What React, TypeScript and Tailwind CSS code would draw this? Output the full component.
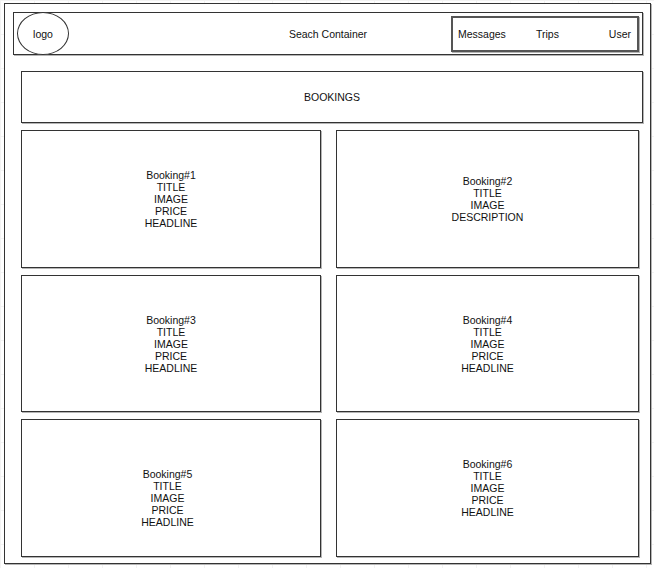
import React from 'react';

type Booking = { id: number; lines: string[]; shift?: string };

const bookings: Booking[] = [
    { id: 1, lines: ['TITLE', 'IMAGE', 'PRICE', 'HEADLINE'] },
    { id: 2, lines: ['TITLE', 'IMAGE', 'DESCRIPTION'] },
    { id: 3, lines: ['TITLE', 'IMAGE', 'PRICE', 'HEADLINE'] },
    { id: 4, lines: ['TITLE', 'IMAGE', 'PRICE', 'HEADLINE'] },
    { id: 5, lines: ['TITLE', 'IMAGE', 'PRICE', 'HEADLINE'], shift: 'pt-[19px] pr-[7px]' },
    { id: 6, lines: ['TITLE', 'IMAGE', 'PRICE', 'HEADLINE'] },
];

const box = 'border border-[#333] bg-white shadow-[1px_1px_0_#b5b5b5]';

const App: React.FC = () => {
    return (
        <div
            className="w-[654px] h-[568px] overflow-hidden bg-white bg-[linear-gradient(to_right,#f3f3f3_1px,transparent_1px),linear-gradient(to_bottom,#f3f3f3_1px,transparent_1px)] bg-[size:34px_34px] pt-[3px] pl-[4px] text-[10.5px] leading-[12px] text-[#111]"
            style={{ fontFamily: '"Liberation Sans", Arial, sans-serif' }}
        >
            <div className={`w-[647px] h-[561px] ${box}`}>
                {/* Header */}
                <header className={`ml-[8px] mt-[8px] w-[630px] h-[43px] grid grid-cols-3 items-center ${box}`}>
                    <div className="flex items-center h-full">
                        <div className="ml-[3px] -my-[1px] w-[52px] h-[43px] rounded-[50%] border border-[#333] bg-white flex items-center justify-center">
                            logo
                        </div>
                    </div>
                    <div className="text-center">Seach Container</div>
                    <div className="flex justify-end pr-[3px]">
                        <nav className="w-[188px] h-[36px] border-2 border-[#555] shadow-[1px_1px_0_#b5b5b5] flex items-center pl-[5px] pr-[6px]">
                            <span className="w-[78px]">Messages</span>
                            <span>Trips</span>
                            <span className="ml-auto">User</span>
                        </nav>
                    </div>
                </header>

                {/* Bookings title */}
                <div className={`ml-[16px] mt-[16px] w-[622px] h-[52px] flex items-center justify-center ${box}`}>
                    BOOKINGS
                </div>

                {/* Booking cards */}
                <div className="ml-[16px] mt-[7px] grid grid-cols-[300px_303px] grid-rows-[138px_137px_138px] gap-x-[15px] gap-y-[7px]">
                    {bookings.map((b) => (
                        <div key={b.id} className={`flex flex-col items-center justify-center text-center ${box} ${b.shift ?? ''}`}>
                            <span>Booking#{b.id}</span>
                            {b.lines.map((l) => (
                                <span key={l}>{l}</span>
                            ))}
                        </div>
                    ))}
                </div>
            </div>
        </div>
    );
};

export default App;
